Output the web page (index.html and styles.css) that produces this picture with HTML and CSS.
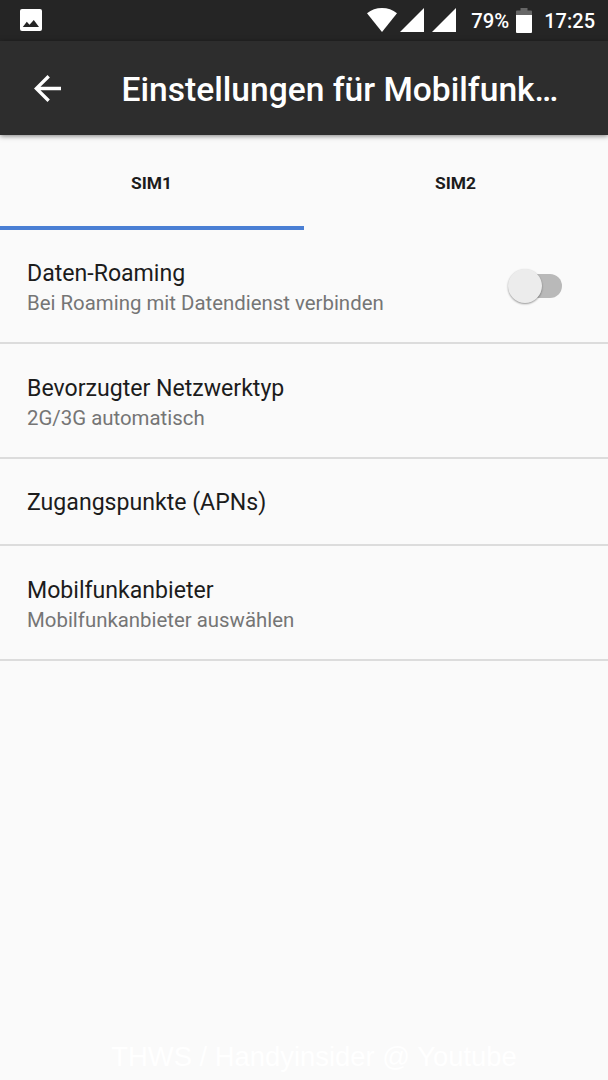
FILE: index.html
```html
<!DOCTYPE html>
<html lang="de">
<head>
    <meta charset="UTF-8">
    <meta name="viewport" content="width=device-width, initial-scale=1.0">
    <title>Einstellungen für Mobilfunknetze</title>
    <link rel="stylesheet" href="styles.css">
</head>
<body>
    <!-- Status bar -->
    <div class="status-bar">
        <svg class="icon-image" viewBox="0 0 22 22">
            <rect width="22" height="22" rx="2" fill="#fff"/>
            <path d="M2.800 18 L6.800 12.800 L9.500 15.800 L13.800 11 L19 18 Z" fill="#252525"/>
        </svg>
        <div class="status-right">
            <svg class="icon-wifi" viewBox="0 0 30 24">
                <path d="M0 5.300 Q6.500 0 15 0 Q23.500 0 30 5.300 L15 24 Z" fill="#fff"/>
            </svg>
            <svg class="icon-signal" viewBox="0 0 24 24">
                <path d="M0 24 L24 0 V24 Z" fill="#fff"/>
            </svg>
            <svg class="icon-signal second" viewBox="0 0 24 24">
                <path d="M0 24 L24 0 V24 Z" fill="#fff"/>
            </svg>
            <span class="percent">79%</span>
            <svg class="icon-battery" viewBox="0 0 16 25">
                <path d="M0 7 V3.500 Q0 2.500 1 2.500 H4.500 V0 H11.500 V2.500 H15 Q16 2.500 16 3.500 V7 Z" fill="#666"/>
                <path d="M0 7 H16 V24 Q16 25 15 25 H1 Q0 25 0 24 Z" fill="#fff"/>
            </svg>
            <span class="clock">17:25</span>
        </div>
    </div>

    <!-- Toolbar -->
    <header class="toolbar">
        <svg class="icon-back" viewBox="4 4 16 16">
            <path d="M20 11H7.830l5.590-5.590L12 4l-8 8 8 8 1.410-1.410L7.830 13H20v-2z" fill="#fff"/>
        </svg>
        <h1>Einstellungen für Mobilfunk…</h1>
    </header>

    <!-- SIM tabs -->
    <nav class="tabs">
        <div class="tab active">SIM1</div>
        <div class="tab">SIM2</div>
    </nav>

    <main class="settings">
        <div class="setting">
            <div class="setting-text">
                <h2>Daten-Roaming</h2>
                <p>Bei Roaming mit Datendienst verbinden</p>
            </div>
            <div class="switch"><span class="thumb"></span></div>
        </div>
        <div class="setting">
            <div class="setting-text">
                <h2>Bevorzugter Netzwerktyp</h2>
                <p>2G/3G automatisch</p>
            </div>
        </div>
        <div class="setting single">
            <div class="setting-text">
                <h2>Zugangspunkte (APNs)</h2>
            </div>
        </div>
        <div class="setting">
            <div class="setting-text">
                <h2>Mobilfunkanbieter</h2>
                <p>Mobilfunkanbieter auswählen</p>
            </div>
        </div>
    </main>

    <footer class="credit">THWS / Handyinsider @ Youtube</footer>
</body>
</html>
```
FILE: styles.css
```css
* {
    margin: 0;
    padding: 0;
    box-sizing: border-box;
}

body {
    height: 1080px;
    display: flex;
    flex-direction: column;
    background-color: #fafafa;
    color: #1c1c1c;
    font-family: Roboto, sans-serif;
    overflow: hidden;
}

svg {
    display: block;
    flex-shrink: 0;
}

/* Status bar */
.status-bar {
    height: 41px;
    flex-shrink: 0;
    display: flex;
    align-items: center;
    justify-content: space-between;
    padding: 0 13px 1px 19.5px;
    background-color: #252525;
    color: #fff;
    font-size: 20.3px;
    font-weight: 500;
}

.status-right {
    display: flex;
    align-items: center;
}

.percent,
.clock {
    padding-top: 2px;
}

.clock {
    font-size: 20px;
}

.icon-image {
    width: 22px;
    height: 22px;
}

.icon-wifi {
    width: 30px;
    height: 24px;
    margin-right: 3px;
}

.icon-signal {
    width: 24px;
    height: 24px;
}

.icon-signal.second {
    margin-left: 8px;
    margin-right: 15.5px;
}

.icon-battery {
    width: 16px;
    height: 25px;
    margin-left: 6.5px;
    margin-right: 12.5px;
}

/* Toolbar */
.toolbar {
    height: 94px;
    flex-shrink: 0;
    display: flex;
    align-items: center;
    padding: 0 34px 0 34px;
    background-color: #2d2d2d;
    color: #fff;
    box-shadow: 0 1px 5px rgba(0, 0, 0, 0.5);
    z-index: 1;
}

.icon-back {
    width: 27px;
    height: 27px;
    margin-right: 60.5px;
}

.toolbar h1 {
    padding-top: 3px;
    font-size: 33.6px;
    font-weight: 500;
    line-height: 40px;
    white-space: nowrap;
}

/* Tabs */
.tabs {
    height: 95px;
    flex-shrink: 0;
    display: flex;
}

.tab {
    flex: 1;
    display: flex;
    align-items: center;
    justify-content: center;
    border-bottom: 4px solid transparent;
    padding: 4px 1px 0 0;
    font-size: 17.4px;
    font-weight: 700;
}

.tab.active {
    border-bottom-color: #4a7fd4;
}

/* Settings list */
.setting {
    height: 115px;
    display: flex;
    align-items: center;
    justify-content: space-between;
    padding: 0 46px 0 27px;
    border-bottom: 2px solid #dcdcdc;
}

.setting:first-child {
    height: 114px;
}

.setting.single {
    height: 87px;
}

.setting-text {
    padding-top: 3px;
}

.setting h2 {
    font-size: 23.1px;
    font-weight: 400;
    line-height: 32px;
}

.setting p {
    color: #757575;
    font-size: 20.4px;
    line-height: 27px;
}

.switch {
    width: 54px;
    height: 24px;
    display: flex;
    align-items: center;
    background: linear-gradient(#b9b9b9, #b9b9b9) right center / 36px 24px no-repeat;
    border-radius: 12px;
}

.thumb {
    width: 34px;
    height: 34px;
    border-radius: 50%;
    background-color: #ececec;
    box-shadow: 0 1px 2px rgba(0, 0, 0, 0.4);
}

.credit {
    margin-top: auto;
    padding: 0 0 7px 20px;
    color: #fff;
    font-family: "Liberation Sans", sans-serif;
    font-size: 27.4px;
    line-height: 32px;
    text-align: center;
}
```
